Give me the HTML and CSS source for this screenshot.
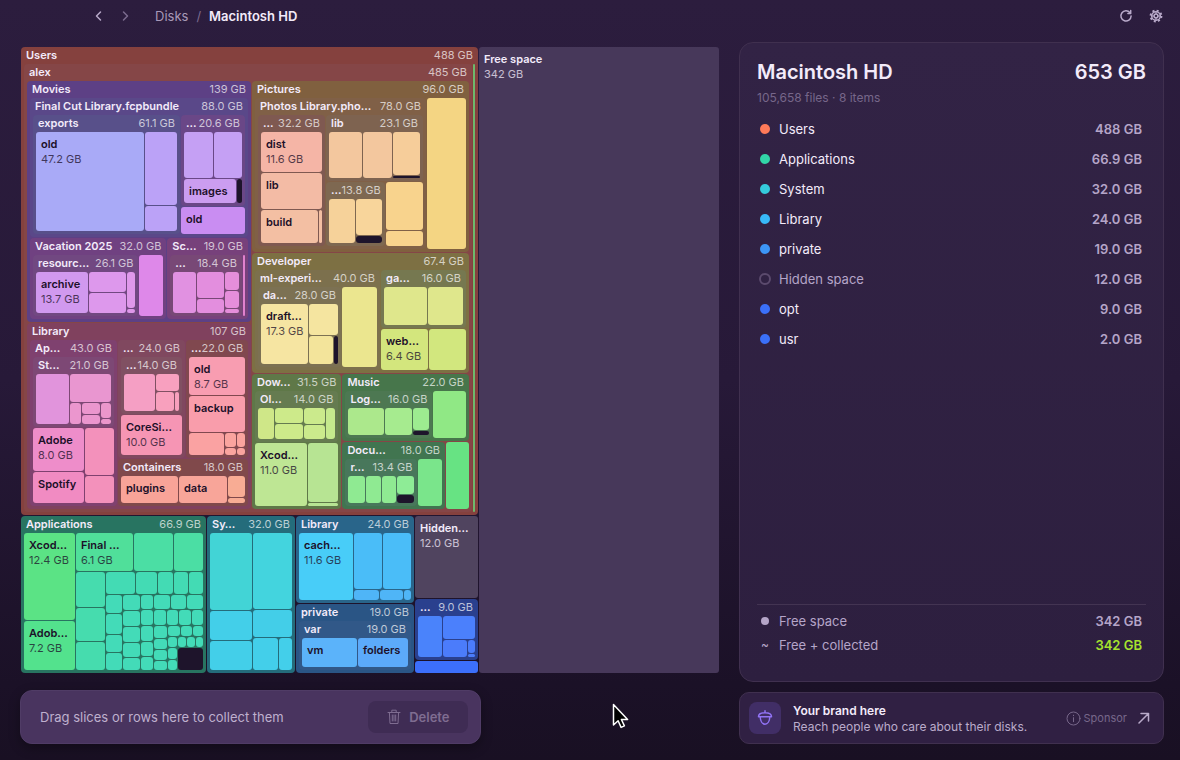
FILE: index.html
```html
<!DOCTYPE html>
<html lang="en">
<head>
<meta charset="utf-8">
<meta name="viewport" content="width=device-width, initial-scale=1">
<title>Macintosh HD</title>
<link rel="stylesheet" href="styles.css">
</head>
<body>
<header class="topbar">
  <div class="history">
    <button class="icon-btn" aria-label="Back"><svg width="12" height="12" viewBox="0 0 12 12"><path d="M7.500 2 3.500 6l4 4"/></svg></button>
    <button class="icon-btn faint" aria-label="Forward"><svg width="12" height="12" viewBox="0 0 12 12"><path d="m4.500 2 4 4-4 4"/></svg></button>
  </div>
  <nav class="crumbs" aria-label="Breadcrumb"><a href="#disks">Disks</a><span class="sep">/</span><strong>Macintosh HD</strong></nav>
  <div class="tools">
    <button class="icon-btn" aria-label="Rescan"><svg width="14" height="14" viewBox="0 0 14 14"><path d="M11 3.700A5.100 5.100 0 1 0 12.100 7"/><path d="M11.700 1.500v3H8.900"/></svg></button>
    <button class="icon-btn" aria-label="Settings"><svg width="14" height="14" viewBox="0 0 14 14"><circle cx="7" cy="7" r="4.300"/><circle cx="7" cy="7" r="1.900"/><circle class="teeth" cx="7" cy="7" r="5.400"/><path class="thin" d="M7 2.700v2.400M7 8.900v2.400M2.700 7h2.400M8.900 7h2.400"/></svg></button>
  </div>
</header>
<main class="layout">
  <section class="left">
    <div class="map" id="map" aria-label="Disk usage map"></div>
    <div class="tray">
      <span>Drag slices or rows here to collect them</span>
      <button class="delete" disabled><svg width="14" height="16" viewBox="0 0 14 16"><path d="M1 3.500h12M4.800 3.300V1.200h4.400v2.100M2.400 3.500l.6 11h8l.6-11M5.300 6v6M7 6v6M8.700 6v6"/></svg>Delete</button>
    </div>
  </section>
  <aside class="right">
    <section class="panel">
      <div class="panel-head"><h1>Macintosh HD</h1><span class="total">653 GB</span></div>
      <p class="meta">105,658 files · 8 items</p>
      <ul class="rows">
        <li><i class="dot users"></i><span>Users</span><b>488 GB</b></li>
        <li><i class="dot apps"></i><span>Applications</span><b>66.9 GB</b></li>
        <li><i class="dot system"></i><span>System</span><b>32.0 GB</b></li>
        <li><i class="dot library"></i><span>Library</span><b>24.0 GB</b></li>
        <li><i class="dot private"></i><span>private</span><b>19.0 GB</b></li>
        <li class="muted"><i class="dot hidden-space"></i><span>Hidden space</span><b>12.0 GB</b></li>
        <li><i class="dot opt"></i><span>opt</span><b>9.0 GB</b></li>
        <li><i class="dot usr"></i><span>usr</span><b>2.0 GB</b></li>
      </ul>
      <ul class="rows summary">
        <li class="muted"><i class="dot free"></i><span>Free space</span><b>342 GB</b></li>
        <li class="muted"><i class="tilde">~</i><span>Free + collected</span><b class="good">342 GB</b></li>
      </ul>
    </section>
    <a class="promo" href="#sponsor">
      <span class="promo-icon"><svg width="18" height="18" viewBox="0 0 18 18"><path d="M9 3.800V1.800M2.500 7.800c0-2.500 2.700-4 6.500-4s6.500 1.500 6.500 4zM4.200 8c.2 4 2.200 7.200 4.800 7.200S13.600 12 13.800 8"/></svg></span>
      <span class="promo-text"><strong>Your brand here</strong><span>Reach people who care about their disks.</span></span>
      <span class="sponsor"><svg width="15" height="15" viewBox="0 0 15 15"><circle cx="7.500" cy="7.500" r="6.500"/><path d="M7.500 6.700v4M7.500 4.200v.5"/></svg>Sponsor</span>
      <svg class="arrow" width="12" height="12" viewBox="0 0 12 12"><path d="M1 11 10.500 1.500M3 1.500h7.500V9"/></svg>
    </a>
  </aside>
</main>
<svg class="pointer" width="18" height="26" viewBox="0 0 18 26"><path d="M1.500 1.500v20.500l4.600-4.200 3 6.600 3.300-1.500-3-6.400h6.200z"/></svg>
<script src="map.js"></script>
</body>
</html>
```
FILE: map.js
```js
// Node builders. The first argument is the share of the parent's space.
const leaf = (w, color, name, size) => ({ kind: 'leaf', w, color, name, size });
const dark = w => ({ kind: 'leaf', w, color: '#1e142b' });
const row = (w, ...kids) => ({ kind: 'row', w, kids });
const col = (w, ...kids) => ({ kind: 'col', w, kids });
const dir = (w, color, name, size, body) => ({ kind: 'dir', w, color, name, size, kids: [body] });
const cells = (color, ...shares) => shares.map(s => leaf(s, color));

const movies = dir(241, '#5d4085', 'Movies', '139 GB', col(1,
  dir(139, '#5a4889', 'Final Cut Library.fcpbundle', '88.0 GB', row(1,
    dir(147, '#58508a', 'exports', '61.1 GB', row(1,
      leaf(108, '#a9aaf7', 'old', '47.2 GB'), col(32, ...cells('#bba2f7', 73, 25)))),
    col(64,
      dir(91, '#6a4787', '…', '20.6 GB', col(1,
        row(46, ...cells('#c5a0f4', 29, 28)),
        row(24, leaf(52, '#cb9df0', 'images'), dark(5)))),
      leaf(27, '#c98df2', 'old')))),
  row(81,
    dir(137, '#704181', 'Vacation 2025', '32.0 GB', row(1,
      dir(106, '#714881', 'resourc…', '26.1 GB', row(1,
        leaf(53, '#d199ef', 'archive', '13.7 GB'), col(38, ...cells('#dd98ec', 20, 21)), col(9, ...cells('#df98ea', 36, 4)))),
      leaf(24, '#de88e9'))),
    dir(81, '#77417b', 'Sc…', '19.0 GB', row(1,
      dir(71, '#784876', '…', '18.4 GB', row(1,
        leaf(23, '#e191e1'), col(27, ...cells('#e38ede', 26, 14)), col(14, ...cells('#e58edb', 18, 17, 4)))),
      leaf(2, '#e081cd'))))));

const library = dir(186, '#80415e', 'Library', '107 GB', row(1,
  dir(87, '#7f416f', 'Ap…', '43.0 GB', col(1,
    dir(70, '#7d4875', 'St…', '21.0 GB', row(1,
      leaf(33, '#e194dc'),
      col(41, leaf(28, '#e996d0'), row(21, leaf(11, '#eb96ce'), col(18, ...cells('#eb96ce', 11, 9)), col(10, ...cells('#eb96cb', 15, 5)))))),
    row(74,
      col(51, leaf(43, '#ee8dca', 'Adobe', '8.0 GB'), leaf(31, '#f18bc2', 'Spotify')),
      col(29, ...cells('#f391bb', 46, 27))))),
  col(130,
    row(118,
      dir(67, '#80485f', '…', '24.0 GB', col(1,
        dir(57, '#805062', '…', '14.0 GB', row(1,
          leaf(31, '#f59fc4'), col(23, leaf(17, '#f8a0bf'), row(19, ...cells('#f8a0bd', 18, 4))))),
        leaf(40, '#f695b4', 'CoreSi…', '10.0 GB'))),
      dir(62, '#80484f', '…', '22.0 GB', col(1,
        leaf(38, '#f89db1', 'old', '8.7 GB'),
        leaf(37, '#f99dab', 'backup'),
        row(22, leaf(35, '#faa2a2'), col(20, row(14, ...cells('#faa49f', 11, 8)), row(7, ...cells('#faa49f', 11, 8))))))),
    dir(47, '#80494b', 'Containers', '18.0 GB', row(1,
      leaf(57, '#f8a398', 'plugins'), leaf(48, '#f8a599', 'data'), col(17, ...cells('#f8ac94', 19, 5)))))));

const pictures = dir(171, '#80603f', 'Pictures', '96.0 GB', row(1,
  dir(171, '#806047', 'Photos Library.pho…', '78.0 GB', row(1,
    dir(67, '#7f5951', '…', '32.2 GB', col(1,
      leaf(40, '#f5b5a6', 'dist', '11.6 GB'), leaf(37, '#f3bba5', 'lib'),
      row(33, leaf(58, '#f3bfa3', 'build'), leaf(3, '#f3bfa3')))),
    col(97,
      dir(66, '#7e6350', 'lib', '23.1 GB', row(1,
        ...cells('#f3c79e', 33, 30), col(27, leaf(43, '#f6cd9a'), dark(2)))),
      row(64,
        dir(59, '#7e6851', '…', '13.8 GB', row(1,
          leaf(26, '#f6d29a'), col(27, leaf(38, '#f8d59b'), dark(7)))),
        col(37, ...cells('#f8d38d', 49, 15)))))),
  leaf(39, '#f4d583')));

const developer = dir(120, '#7d7043', 'Developer', '67.4 GB', row(1,
  dir(125, '#7c704d', 'ml-experi…', '40.0 GB', row(1,
    dir(83, '#7c7153', 'da…', '28.0 GB', row(1,
      leaf(47, '#f6e5a2', 'draft…', '17.3 GB'),
      col(29, leaf(31, '#f5e5a0'), row(28, leaf(25, '#f3e49b'), dark(4))))),
    leaf(35, '#ebe68f'))),
  col(85,
    dir(58, '#767850', 'ga…', '16.0 GB', row(1, ...cells('#dfe78c', 44, 35))),
    row(41, leaf(48, '#d3e67d', 'web…', '6.4 GB'), leaf(37, '#d2e77e')))));

const downloads = dir(89, '#5f7848', 'Dow…', '31.5 GB', col(1,
  dir(51, '#657b50', 'Ol…', '14.0 GB', row(1,
    leaf(16, '#cfe788'), col(28, ...cells('#cdea8a', 15, 15)), col(22, ...cells('#cbea8c', 16, 14)), leaf(9, '#c5e98d'))),
  row(63, leaf(52, '#bee694', 'Xcod…', '11.0 GB'), col(31, ...cells('#b7e493', 59, 3)))));

const media = col(126,
  dir(67, '#47764b', 'Music', '22.0 GB', row(1,
    dir(88, '#4d7852', 'Log…', '16.0 GB', row(1,
      leaf(36, '#ace88c'), leaf(27, '#a6eb8f'), col(16, leaf(23, '#9dec90'), dark(4)))),
    leaf(33, '#90e885'))),
  row(67,
    dir(103, '#417550', 'Docu…', '18.0 GB', row(1,
      dir(73, '#48775b', 'r…', '13.4 GB', row(1,
        ...cells('#8fea92', 17, 15, 14), col(17, leaf(18, '#8eec96'), dark(8)))),
      leaf(24, '#7ae58b'))),
    leaf(23, '#67e383')));

const users = dir(468, '#85413e', 'Users', '488 GB', row(1,
  dir(448, '#854647', 'alex', '485 GB', row(1,
    col(224, movies, library),
    col(217, pictures, developer, row(135, downloads, media)))),
  leaf(2, '#6eb86c')));

const teal = '#43dbb8';
const applications = dir(185, '#287461', 'Applications', '66.9 GB', row(1,
  col(51, leaf(87, '#5be385', 'Xcod…', '12.4 GB'), leaf(49, '#53e28d', 'Adob…', '7.2 GB')),
  col(127,
    row(38, leaf(57, '#50df9a', 'Final …', '6.1 GB'), ...cells('#4bdea4', 39, 29)),
    row(98,
      col(29, ...cells('#46dcae', 35, 33, 28)),
      col(97,
        row(22, ...cells('#43dbb4', 29, 20, 15, 14, 14)),
        row(75,
          col(16, ...cells(teal, 18, 19, 17, 17)),
          col(17, ...cells(teal, 15, 15, 14, 14, 12)),
          col(12, ...cells(teal, 14, 15, 16, 14, 13)),
          col(49,
            row(14, ...cells(teal, 15, 14, 15)),
            row(15, ...cells(teal, 12, 11, 12, 11)),
            row(44,
              col(13, ...cells(teal, 12, 10, 10, 9)),
              col(35,
                row(10, ...cells(teal, 12, 12, 10)),
                row(10, ...cells(teal, 9, 8, 8, 7)),
                row(22, col(9, ...cells(teal, 10, 10)), dark(25)))))))))));

const system = dir(88, '#246c7b', 'Sy…', '32.0 GB', row(1,
  col(42, leaf(76, '#42d4d6'), ...cells('#43cfe9', 29, 29)),
  col(39, leaf(76, '#43d4de'), leaf(27, '#43cee8'), row(32, ...cells('#43cfea', 26, 13)))));

const sysLibrary = dir(87, '#29658a', 'Library', '24.0 GB', row(1,
  leaf(54, '#48cdf8', 'cach…', '11.6 GB'),
  col(57, row(56, ...cells('#4abdf8', 28, 28)), row(10, ...cells('#4fb5f7', 25, 23, 7)))));

const privateDir = dir(69, '#2a5585', 'private', '19.0 GB', col(1,
  dir(49, '#315888', 'var', '19.0 GB', row(1, leaf(55, '#5bb3fa', 'vm'), leaf(50, '#5caafa', 'folders')))));

const opt = dir(61, '#2a408e', '…', '9.0 GB', row(1,
  leaf(24, '#4a83fb'), col(32, leaf(23, '#4b80fc'), row(17, leaf(24, '#4b7cfb'), col(7, ...cells('#4b7cfb', 13, 3))))));

const disk = row(1,
  col(457, users,
    row(157, applications, system, col(118, sysLibrary, privateDir),
      col(63, Object.assign(leaf(82, '#50445f', 'Hidden…', '12.0 GB'), { light: true }), opt, leaf(12, '#3c6ffb')))),
  Object.assign(leaf(240, '#47385a', 'Free space', '342 GB'), { light: true }));

function span(cls, text) {
  const el = document.createElement('span');
  el.className = cls;
  el.textContent = text;
  return el;
}

function draw(node) {
  const el = document.createElement('div');
  el.className = node.kind + (node.light ? ' light' : '');
  if (node.color) el.style.backgroundColor = node.color;
  if (node.kind === 'leaf') {
    if (node.name) el.append(span('name', node.name));
    if (node.size) el.append(span('size', node.size));
    return el;
  }
  if (node.kind === 'dir') {
    const head = document.createElement('div');
    head.className = 'head';
    head.append(span('name', node.name), span('size', node.size));
    el.append(head);
  } else {
    const tracks = node.kids.map(k => `minmax(0, ${k.w}fr)`).join(' ');
    el.style[node.kind === 'row' ? 'gridTemplateColumns' : 'gridTemplateRows'] = tracks;
  }
  el.append(...node.kids.map(draw));
  return el;
}

document.getElementById('map').append(draw(disk));
```
FILE: styles.css
```css
* { box-sizing: border-box; }
body {
  margin: 0;
  min-height: 100vh;
  display: flex;
  flex-direction: column;
  background: linear-gradient(#2c1d3e, #271938 50%, #1b1127 90%, #191023);
  color: #f3ebfa;
  font-family: Inter, "Liberation Sans", sans-serif;
  font-size: 13px;
}
button { font: inherit; color: inherit; border: 0; background: none; padding: 0; }
svg { fill: none; stroke: currentColor; stroke-linecap: round; stroke-linejoin: round; }

.topbar { display: flex; align-items: center; height: 32px; padding: 0 16px 0 92px; }
.history { display: flex; gap: 12px; width: 63px; }
.icon-btn { display: grid; place-items: center; width: 14px; height: 20px; color: #b9aaca; }
.icon-btn svg { stroke-width: 1.5; }
.icon-btn.faint { color: #7c6b8e; }
.icon-btn .teeth { stroke-width: 2; stroke-dasharray: 2 2.240; stroke-linecap: butt; }
.icon-btn .thin { stroke-width: 1; }
.crumbs { display: flex; gap: 8px; flex: 1; line-height: 20px; }
.crumbs a { color: #a899b8; text-decoration: none; }
.crumbs .sep { color: #7c6b8e; }
.crumbs strong { font-weight: 600; }
.tools { display: flex; gap: 16px; padding-right: 1px; }

.layout {
  flex: 1;
  display: grid;
  grid-template-columns: minmax(0, 699fr) minmax(0, 425fr);
  gap: 20px;
  padding: 10px 16px 16px 20px;
}
.left { display: flex; flex-direction: column; gap: 17px; padding-top: 5px; }
.map { flex: 1; display: grid; margin-left: 1px; font-size: 11px; line-height: 15px; }
.row, .col { display: grid; gap: 1px; min-width: 0; min-height: 0; }
.dir {
  display: grid;
  grid-template-rows: 17px minmax(0, 1fr);
  grid-template-columns: minmax(0, 1fr);
  padding: 0 3px 3px;
  border-radius: 4px;
  overflow: hidden;
}
.head {
  display: flex;
  justify-content: space-between;
  padding: 0 2px;
  line-height: 17px;
  white-space: nowrap;
}
.name { font-weight: 600; }
.head .size { color: #ffffffb0; }
.leaf {
  display: flex;
  flex-direction: column;
  padding: 5px 0 0 5px;
  border-radius: 3px;
  overflow: hidden;
  white-space: nowrap;
  color: #1c1029;
  min-width: 0;
  min-height: 0;
}
.leaf:empty { padding: 0; }
.leaf .size { opacity: 0.75; }
.leaf.light { color: #f3ebfa; }

.tray {
  display: flex;
  align-items: center;
  justify-content: space-between;
  width: 66%;
  height: 54px;
  padding: 0 12px 0 19px;
  border: 1px solid #503c66;
  border-radius: 12px;
  background: #49345f;
  color: #bfb0ce;
  box-shadow: 0 4px 12px #0000004d;
}
.delete {
  display: flex;
  align-items: center;
  justify-content: center;
  gap: 8px;
  width: 100px;
  height: 32px;
  border-radius: 8px;
  background: #3f2c54;
  color: #7f6d91;
  font-weight: 600;
}

.right { display: flex; flex-direction: column; gap: 10px; }
.panel {
  flex: 1;
  display: flex;
  flex-direction: column;
  padding: 15px 17px 24px;
  border: 1px solid #40304f;
  border-radius: 14px;
  background: linear-gradient(#322345, #2d1f3f);
}
.panel-head { display: flex; justify-content: space-between; font-size: 20px; line-height: 28px; font-weight: 600; }
h1 { margin: 0; font: inherit; }
.meta { margin: 4px 0 8px; font-size: 12px; line-height: 16px; color: #77678a; }
.rows { list-style: none; margin: 0; padding: 0 4px 0 2px; }
.rows li { display: flex; align-items: center; gap: 8px; height: 30px; line-height: 20px; }
.rows span { flex: 1; }
.rows b { font-weight: 600; color: #b5a5c8; }
.rows .muted { color: #b5a5c8; }
.dot { width: 10px; height: 10px; margin: 0 1px; border-radius: 50%; }
.users { background: #ff7a59; }
.apps { background: #32d6a8; }
.system { background: #35cbdc; }
.library { background: #38b9f8; }
.private { background: #3d96f7; }
.hidden-space { width: 12px; height: 12px; margin: 0; border: 2px solid #5b4a6d; }
.opt, .usr { background: #3b70f8; }
.free { width: 8px; height: 8px; margin: 0 2px; background: #b5a5c8; }
.tilde { width: 12px; text-align: center; font-style: normal; font-size: 12px; }
.rows .good { color: #a6e22e; }
.summary { margin-top: auto; padding-top: 4px; border-top: 1px solid #433452; }
.summary li { height: 24px; }

.promo {
  display: flex;
  align-items: center;
  height: 52px;
  padding: 0 13px 0 9px;
  border: 1px solid #40304f;
  border-radius: 10px;
  background: #302043;
  color: inherit;
  text-decoration: none;
}
.promo-icon { display: grid; place-items: center; width: 32px; height: 32px; border-radius: 8px; background: #412e66; color: #9173f5; }
.promo-icon svg { stroke-width: 1.5; }
.promo-text { display: flex; flex-direction: column; flex: 1; margin-left: 12px; padding-top: 2px; font-size: 12px; line-height: 16px; color: #bbaccb; white-space: nowrap; }
.promo-text strong { font-weight: 600; color: #f3ebfa; }
.sponsor { display: flex; align-items: center; gap: 3px; margin-right: 11px; font-size: 11px; color: #77678a; }
.arrow { color: #b9aaca; stroke-width: 1.5; }

.pointer { position: absolute; left: 612px; top: 703px; fill: #000; stroke: #fff; stroke-width: 1.5; }
```
